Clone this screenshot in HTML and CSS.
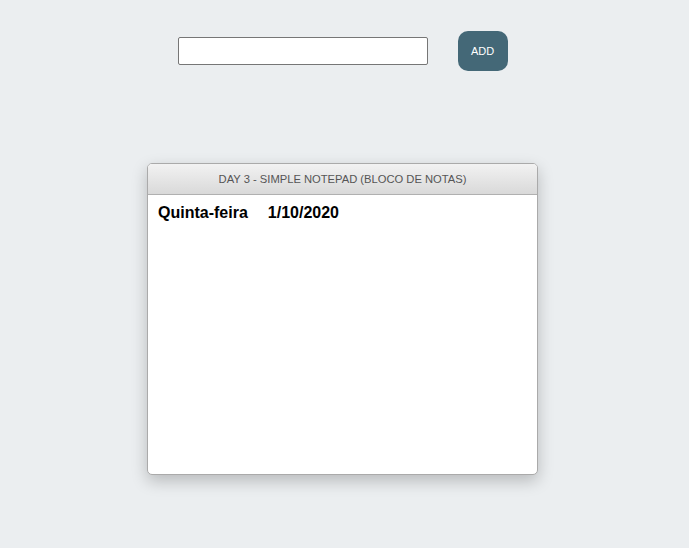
FILE: index.html
```html
<!DOCTYPE html>
<html lang="pt">
<head>
<meta charset="utf-8">
<title>Simple Notepad</title>
<link rel="stylesheet" href="styles.css">
</head>
<body>
<div class="toolbar">
  <input class="note-input" type="text">
  <button class="add-btn">ADD</button>
</div>
<div class="notepad">
  <div class="notepad-header">DAY 3 - SIMPLE NOTEPAD (BLOCO DE NOTAS)</div>
  <div class="notepad-body">
    <div class="date-line"><span class="weekday">Quinta-feira</span><span class="date">1/10/2020</span></div>
  </div>
</div>
</body>
</html>
```
FILE: styles.css
```css
html, body {
  margin: 0;
  padding: 0;
}
body {
  background: #ebeef0;
  font-family: "Liberation Sans", Arial, sans-serif;
  min-height: 548px;
  padding: 31px 4px 0 0;
  box-sizing: border-box;
}
.toolbar {
  display: flex;
  justify-content: center;
  align-items: center;
  gap: 30px;
}
.note-input {
  width: 250px;
  height: 28px;
  box-sizing: border-box;
  border: 1px solid #767676;
  border-radius: 2px;
  background: #fff;
  padding: 2px 4px;
  margin: 0;
  font-family: "Liberation Sans", Arial, sans-serif;
  font-size: 13px;
}
.add-btn {
  width: 50px;
  height: 40px;
  border: none;
  border-radius: 10px;
  background: #446877;
  color: #fff;
  font-family: "Liberation Sans", Arial, sans-serif;
  font-size: 11px;
  padding: 0;
  margin: 0;
}
.notepad {
  width: 391px;
  height: 312px;
  box-sizing: border-box;
  margin: 92px auto 0;
  background: #fff;
  border: 1px solid #aaaaaa;
  border-radius: 5px;
  box-shadow: 0 6px 16px rgba(0, 0, 0, 0.22);
  overflow: hidden;
}
.notepad-header {
  height: 30px;
  border-bottom: 1px solid #b0b0b0;
  background: linear-gradient(#f2f2f2, #d9d9d9);
  color: #555;
  font-size: 11.2px;
  display: flex;
  align-items: center;
  justify-content: center;
}
.notepad-body {
  padding: 9px 10px;
}
.date-line {
  font-size: 16px;
  font-weight: bold;
  color: #000;
}
.weekday {
  margin-right: 20px;
}
```
